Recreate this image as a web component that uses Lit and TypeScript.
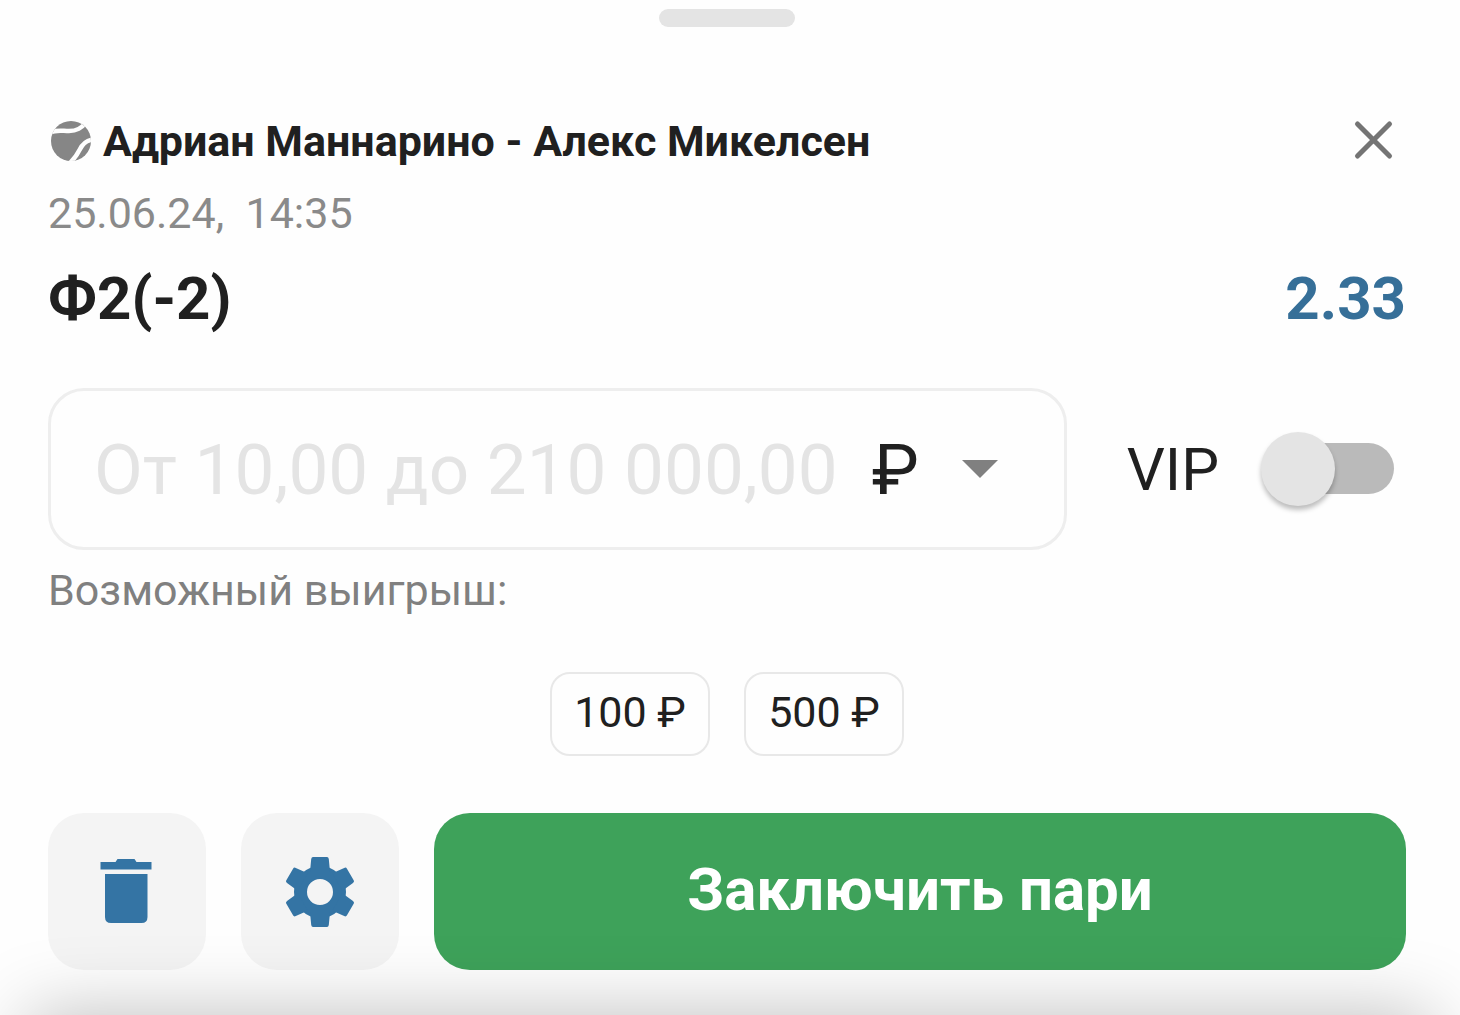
import { LitElement, html, svg, css } from "lit";
import { customElement, state } from "lit/decorators.js";

@customElement("app-root")
export class AppRoot extends LitElement {
  static styles = css`
    :host {
      display: block;
      font-family: Roboto, "Liberation Sans", sans-serif;
      color: #202020;
    }
    *, *::before, *::after { box-sizing: border-box; }
    button, input, select { font: inherit; color: inherit; margin: 0; }
    button { cursor: pointer; border: 0; padding: 0; }
    h1, p { margin: 0; }
    svg { display: block; flex: none; }

    .sheet {
      position: relative;
      overflow: hidden;
      min-height: 100vh;
      display: flex;
      flex-direction: column;
      padding: 9px 54px 45px 48px;
      background: #fefefe;
    }
    .sheet::after {
      content: "";
      position: absolute;
      left: 28px;
      right: 28px;
      bottom: -200px;
      height: 200px;
      box-shadow: 0 0 76px rgba(0, 0, 0, 0.26);
      pointer-events: none;
    }
    .handle {
      align-self: center;
      width: 136px;
      height: 18px;
      border-radius: 9px;
      background: #e4e4e4;
    }
    .event {
      display: flex;
      align-items: center;
      gap: 12px;
      margin-top: 90px;
    }
    .ball { margin-left: 3px; }
    .title {
      flex: 1;
      font-size: 43px;
      line-height: 48px;
      font-weight: 700;
    }
    .close { background: none; color: #747474; }
    .date {
      margin-top: 24px;
      font-size: 43px;
      line-height: 48px;
      color: #8a8a8a;
      white-space: pre;
    }
    .outcome {
      display: flex;
      justify-content: space-between;
      margin-top: 26px;
      font-size: 60px;
      line-height: 72px;
      font-weight: 700;
    }
    .odds { color: #366f98; }
    .stake {
      display: flex;
      align-items: center;
      gap: 60px;
      margin-top: 53px;
    }
    .field {
      flex: 1;
      min-width: 0;
      display: flex;
      align-items: center;
      height: 162px;
      padding: 0 66px 0 43px;
      border: 3px solid #eeeeee;
      border-radius: 36px;
      font-size: 71px;
    }
    .amount {
      flex: 1;
      min-width: 0;
      height: 100%;
      padding: 0;
      border: 0;
      outline: 0;
      background: none;
    }
    .amount::placeholder { color: #e4e4e4; opacity: 1; }
    .currency {
      appearance: none;
      width: 90px;
      padding: 0;
      border: 0;
      outline: 0;
      background: none;
    }
    .arrow { color: #808080; pointer-events: none; }
    .vip {
      display: flex;
      align-items: center;
      gap: 42px;
      padding-right: 12px;
      font-size: 60px;
    }
    .switch {
      appearance: none;
      position: relative;
      width: 133px;
      height: 74px;
      cursor: pointer;
    }
    .switch::before {
      content: "";
      position: absolute;
      inset: 11px 0 12px 8px;
      border-radius: 26px;
      background: #bababa;
    }
    .switch::after {
      content: "";
      position: absolute;
      left: 0;
      top: 0;
      width: 74px;
      height: 74px;
      border-radius: 50%;
      background: #e4e4e4;
      box-shadow: 0 4px 5px rgba(0, 0, 0, 0.26);
    }
    .switch:checked::after { left: 59px; }
    .win {
      margin-top: 16px;
      font-size: 43px;
      line-height: 48px;
      color: #808080;
    }
    .chips {
      display: flex;
      justify-content: center;
      gap: 34px;
      margin-top: 58px;
    }
    .chip {
      width: 160px;
      height: 84px;
      padding-bottom: 4px;
      border: 2px solid #e8e8e8;
      border-radius: 20px;
      background: #fefefe;
      font-size: 43px;
    }
    .actions {
      display: flex;
      gap: 35px;
      margin-top: 57px;
    }
    .tool, .submit {
      display: flex;
      align-items: center;
      justify-content: center;
      height: 157px;
      border-radius: 36px;
    }
    .tool {
      width: 158px;
      background: #f4f4f4;
      color: #3474a4;
    }
    .submit {
      flex: 1;
      padding-bottom: 4px;
      background: #3ea25a;
      color: #fff;
      font-size: 60px;
      font-weight: 700;
    }
  `;

  @state() private amount = "";
  @state() private vip = false;

  private chips = [100, 500];
  private teeth = [0, 60, 120, 180, 240, 300];

  render() {
    return html`
      <main class="sheet">
        <div class="handle"></div>

        <header class="event">
          <svg class="ball" width="40" height="40" viewBox="0 0 40 40" aria-hidden="true">
            <defs><clipPath id="ball"><circle cx="20" cy="20" r="20" /></clipPath></defs>
            <g clip-path="url(#ball)">
              <rect width="40" height="40" fill="#868686" />
              <path d="M-1 11.500C5 8.500 11 10 18 10C26 10 30 7 35 2M42 18.500C34 19.500 31 24 28.500 29C26.500 33 24 37 19 42"
                fill="none" stroke="#fefefe" stroke-width="4.500" />
            </g>
          </svg>
          <h1 class="title">Адриан Маннарино - Алекс Микелсен</h1>
          <button class="close" type="button" aria-label="Закрыть">
            <svg width="64" height="48" viewBox="0 0 64 48">
              <path d="M15.500 7L47.500 39M47.500 7L15.500 39" fill="none" stroke="currentColor"
                stroke-width="5" stroke-linecap="round" />
            </svg>
          </button>
        </header>

        <p class="date">25.06.24,  14:35</p>

        <div class="outcome">
          <span>Ф2(-2)</span>
          <span class="odds">2.33</span>
        </div>

        <div class="stake">
          <div class="field">
            <input class="amount" type="text" inputmode="decimal" aria-label="Сумма пари"
              placeholder="От 10,00 до 210 000,00" .value=${this.amount}
              @input=${(e: Event) => (this.amount = (e.target as HTMLInputElement).value)} />
            <select class="currency" aria-label="Валюта">
              <option>₽</option>
            </select>
            <svg class="arrow" width="36" height="18" viewBox="0 0 36 18" aria-hidden="true">
              <path d="M0 0H36L18 18Z" fill="currentColor" />
            </svg>
          </div>
          <label class="vip">
            VIP
            <input class="switch" type="checkbox" role="switch" .checked=${this.vip}
              @change=${(e: Event) => (this.vip = (e.target as HTMLInputElement).checked)} />
          </label>
        </div>

        <p class="win">Возможный выигрыш:</p>

        <div class="chips">
          ${this.chips.map(
            (sum) => html`<button class="chip" type="button"
              @click=${() => (this.amount = String(sum))}>${sum} ₽</button>`
          )}
        </div>

        <footer class="actions">
          <button class="tool" type="button" aria-label="Удалить">
            <svg width="72" height="72" viewBox="0 0 72 72">
              <path d="M9.500 6H24.500L26.500 3H43.500L45.500 6H60.500V13.500H9.500Z" fill="currentColor" />
              <path d="M14 18H56.500V61Q56.500 67 50.500 67H20Q14 67 14 61Z" fill="currentColor" />
            </svg>
          </button>
          <button class="tool" type="button" aria-label="Настройки">
            <svg width="72" height="72" viewBox="-36 -36 72 72">
              <circle r="19.500" fill="none" stroke="currentColor" stroke-width="13" />
              ${this.teeth.map(
                (angle) => svg`<path transform=${`rotate(${angle})`} fill="currentColor"
                  d="M-10 -20L-8.800 -33Q-8.500 -35 -7 -35H7Q8.500 -35 8.800 -33L10 -20Z" />`
              )}
            </svg>
          </button>
          <button class="submit" type="button">Заключить пари</button>
        </footer>
      </main>
    `;
  }
}
